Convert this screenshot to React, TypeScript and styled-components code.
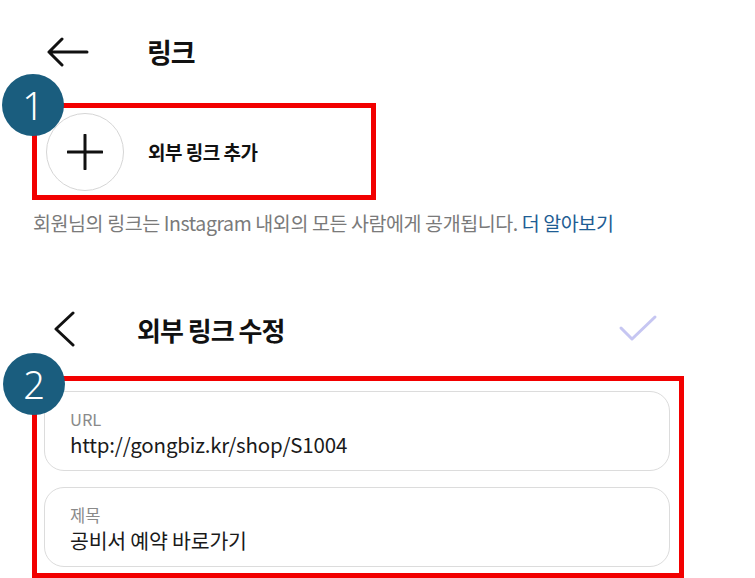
import React from 'react';
import styled, { createGlobalStyle } from 'styled-components';

const GlobalStyle = createGlobalStyle`
  html, body {
    margin: 0;
    padding: 0;
    background: #ffffff;
  }
  body {
    font-family: 'Noto Sans CJK KR', 'Noto Sans', sans-serif;
    color: #111;
  }
`;

const Page = styled.div`
  width: 755px;
  height: 578px;
  overflow: hidden;
  display: flex;
  flex-direction: column;
`;

const TopBar = styled.div`
  height: 104px;
  display: flex;
  align-items: center;
  padding-left: 47px;
`;

const Title = styled.div<{ size: number; offset: number }>`
  margin-left: ${(p) => p.offset}px;
  font-size: ${(p) => p.size}px;
  font-weight: 700;
  letter-spacing: -1px;
  color: #111;
`;

const HighlightBox = styled.div<{ width: number }>`
  position: relative;
  margin-left: 32px;
  width: ${(p) => p.width}px;
  border: 5px solid #f20000;
  box-sizing: border-box;
`;

const Badge = styled.div<{ left: number; top: number }>`
  position: absolute;
  left: ${(p) => p.left}px;
  top: ${(p) => p.top}px;
  width: 62px;
  height: 62px;
  border-radius: 50%;
  background: #1a5d7e;
  color: #fff;
  font-family: 'Noto Sans', sans-serif;
  font-weight: 300;
  font-size: 38px;
  display: flex;
  align-items: center;
  justify-content: center;
  z-index: 2;
`;

const AddRow = styled.div`
  height: 87px;
  display: flex;
  align-items: center;
  padding-left: 9px;
  gap: 24px;
`;

const PlusCircle = styled.div`
  width: 76px;
  height: 76px;
  border-radius: 50%;
  border: 1.5px solid #d6d6d6;
  display: flex;
  align-items: center;
  justify-content: center;
`;

const AddLabel = styled.div`
  font-size: 19px;
  font-weight: 700;
  letter-spacing: -0.5px;
  color: #111;
`;

const Caption = styled.div`
  margin: 11px 0 0 33px;
  font-size: 19.5px;
  line-height: 24px;
  color: #7a7a7a;
  letter-spacing: -0.4px;
`;

const LearnMore = styled.span`
  color: #1f5d94;
`;

const EditBar = styled.div`
  margin-top: 64px;
  height: 60px;
  display: flex;
  align-items: center;
  padding-left: 53px;
  padding-right: 97px;
`;

const Spacer = styled.div`
  flex: 1;
`;

const Fields = styled.div`
  margin-top: 17px;
`;

const FieldStack = styled.div`
  display: flex;
  flex-direction: column;
  gap: 16px;
  padding: 10px 9px 6px 7px;
`;

const Field = styled.div`
  height: 80px;
  box-sizing: border-box;
  border: 1.5px solid #dcdcdc;
  border-radius: 20px;
  padding: 17px 0 0 25px;
`;

const FieldLabel = styled.div`
  font-size: 16.5px;
  line-height: 20px;
  color: #8a8a8a;
`;

const FieldValue = styled.div`
  font-size: 20.5px;
  line-height: 30px;
  color: #1a1a1a;
  letter-spacing: -0.2px;
`;

export default function App() {
  return (
    <>
      <GlobalStyle />
      <Page>
        <TopBar>
          <svg width="42" height="30" viewBox="0 0 42 30">
            <path d="M40 15 H2 M15 2 L2 15 L15 28" fill="none" stroke="#111" strokeWidth="3" strokeLinecap="round" strokeLinejoin="round" />
          </svg>
          <Title size={27} offset={58}>링크</Title>
        </TopBar>

        <HighlightBox width={344}>
          <Badge left={-35} top={-34}>1</Badge>
          <AddRow>
            <PlusCircle>
              <svg width="36" height="36" viewBox="0 0 36 36">
                <path d="M18 1 V35 M1 18 H35" stroke="#111" strokeWidth="3" strokeLinecap="round" />
              </svg>
            </PlusCircle>
            <AddLabel>외부 링크 추가</AddLabel>
          </AddRow>
        </HighlightBox>

        <Caption>
          회원님의 링크는 Instagram 내외의 모든 사람에게 공개됩니다. <LearnMore>더 알아보기</LearnMore>
        </Caption>

        <EditBar>
          <svg width="22" height="36" viewBox="0 0 22 36">
            <path d="M20 2 L3 18 L20 34" fill="none" stroke="#111" strokeWidth="3" strokeLinecap="round" strokeLinejoin="round" />
          </svg>
          <Title size={26} offset={62}>외부 링크 수정</Title>
          <Spacer />
          <svg width="40" height="30" viewBox="0 0 40 30">
            <path d="M3 14 L14 25 L37 3" fill="none" stroke="#c6c6f2" strokeWidth="3" strokeLinecap="round" strokeLinejoin="round" />
          </svg>
        </EditBar>

        <Fields>
          <HighlightBox width={652}>
            <Badge left={-34} top={-28}>2</Badge>
            <FieldStack>
              <Field>
                <FieldLabel>URL</FieldLabel>
                <FieldValue>http://gongbiz.kr/shop/S1004</FieldValue>
              </Field>
              <Field>
                <FieldLabel>제목</FieldLabel>
                <FieldValue>공비서 예약 바로가기</FieldValue>
              </Field>
            </FieldStack>
          </HighlightBox>
        </Fields>
      </Page>
    </>
  );
}
